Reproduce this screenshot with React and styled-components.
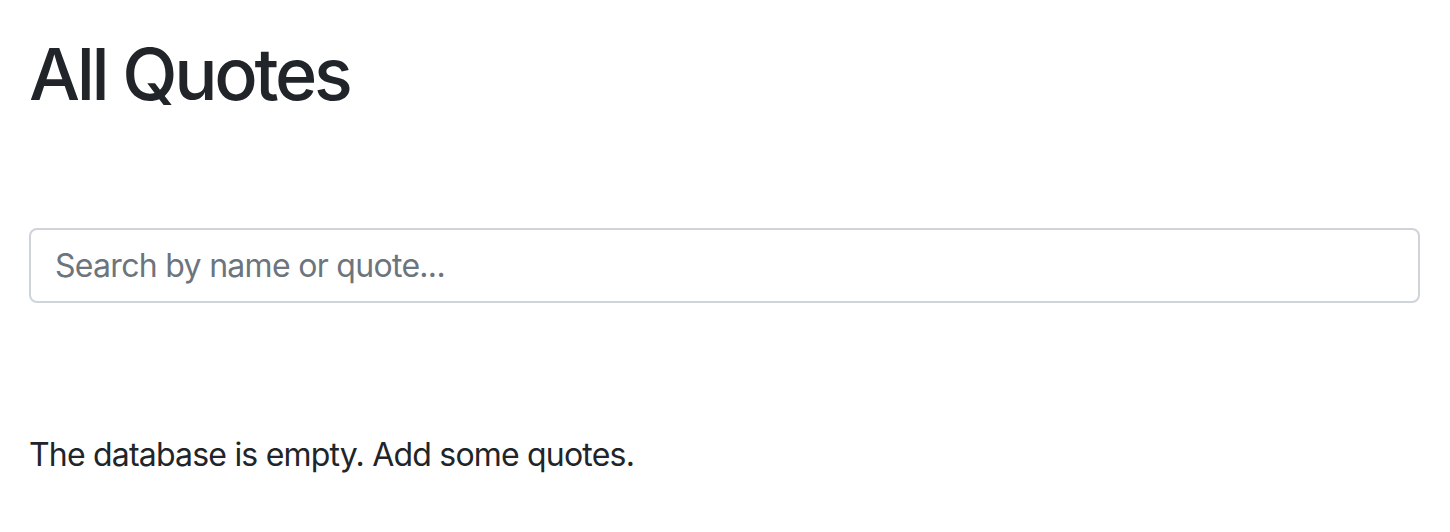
import React from 'react';
import styled, { createGlobalStyle } from 'styled-components';

const GlobalStyle = createGlobalStyle`
  html, body {
    margin: 0;
    padding: 0;
    background: #fff;
  }
  body {
    font-family: Inter, "Liberation Sans", Arial, sans-serif;
    color: #212529;
  }
`;

const Page = styled.div`
  padding: 0 30px 0 29px;
`;

const Title = styled.h1`
  margin: 31px 0 0;
  font-size: 72px;
  font-weight: 500;
  line-height: 1.2;
  letter-spacing: -3.3px;
`;

const SearchInput = styled.input`
  display: block;
  box-sizing: border-box;
  width: 100%;
  height: 75px;
  margin-top: 111px;
  padding: 0 24px;
  font-family: inherit;
  font-size: 32px;
  letter-spacing: -0.7px;
  color: #495057;
  border: 2px solid #ced4da;
  border-radius: 8px;
  outline: none;

  &::placeholder {
    color: #6c757d;
  }
`;

const Message = styled.p`
  margin: 128px 0 0;
  font-size: 32px;
  line-height: 1.5;
  letter-spacing: -0.8px;
`;

export default function App() {
  return (
    <Page>
      <GlobalStyle />
      <Title>All Quotes</Title>
      <SearchInput placeholder="Search by name or quote..." />
      <Message>The database is empty. Add some quotes.</Message>
    </Page>
  );
}
